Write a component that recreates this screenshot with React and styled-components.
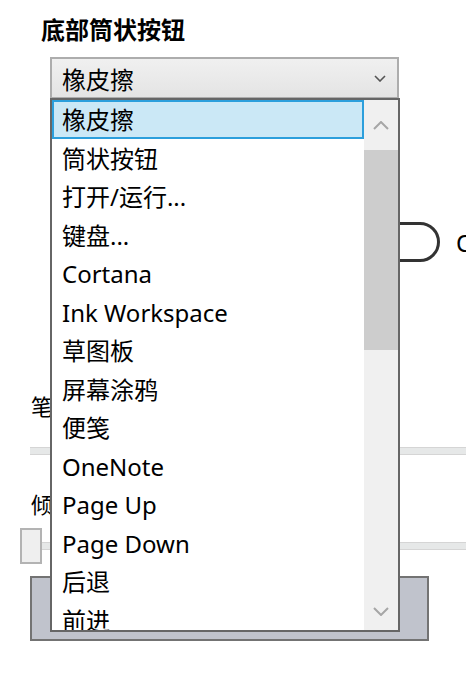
import React from "react";
import styled, { createGlobalStyle } from "styled-components";

const Global = createGlobalStyle`
  html, body { margin: 0; padding: 0; background: #fff; overflow: hidden; }
  body { font-family: "Noto Sans", "Noto Sans CJK SC", sans-serif; color: #000; }
`;

const Page = styled.div`
  width: 466px;
  height: 674px;
  padding-top: 14px;
  box-sizing: border-box;
  overflow: hidden;
`;

const Heading = styled.h2`
  margin: 0 0 11px 41px;
  font-size: 24px;
  line-height: 32px;
  font-weight: 700;
`;

const ComboWrap = styled.div`
  position: relative;
  margin-left: 50px;
  width: 349px;
`;

const Combo = styled.div`
  height: 41px;
  box-sizing: border-box;
  border: 2px solid #adadad;
  border-bottom-width: 1px;
  background: linear-gradient(#f0f0f0, #e4e4e4);
  display: flex;
  align-items: center;
  justify-content: space-between;
  padding: 0 11px 0 10px;
  font-size: 24px;
`;

const DropList = styled.div`
  position: absolute;
  top: 41px;
  left: 0;
  width: 350px;
  height: 534px;
  box-sizing: border-box;
  border: 2px solid #666;
  background: #fff;
  display: flex;
  z-index: 5;
`;

const Items = styled.div`
  flex: 1;
  overflow: hidden;
`;

const Item = styled.div`
  height: 38.5px;
  line-height: 36.5px;
  box-sizing: border-box;
  padding-left: 8px;
  border: 2px solid ${(p) => (p.$selected ? "#2c9fdc" : "transparent")};
  background: ${(p) => (p.$selected ? "#cbe8f6" : "transparent")};
  font-size: 24px;
  white-space: nowrap;
  overflow: hidden;
`;

const ScrollBar = styled.div`
  width: 34px;
  background: #f0f0f0;
  display: flex;
  flex-direction: column;
`;

const ArrowBox = styled.div`
  height: ${(p) => p.$h}px;
  display: flex;
  align-items: center;
  justify-content: center;
`;

const Thumb = styled.div`
  height: 200px;
  background: #cdcdcd;
`;

const Spacer = styled.div`
  flex: 1;
`;

const ToggleRow = styled.div`
  display: flex;
  align-items: center;
  gap: 16px;
  margin: 124px 0 0 352px;
  font-size: 24px;
  white-space: nowrap;
`;

const Toggle = styled.div`
  width: 88px;
  height: 40px;
  box-sizing: border-box;
  border: 3px solid #333;
  border-radius: 20px;
  flex-shrink: 0;
`;

const Label = styled.div`
  margin: ${(p) => p.$mt}px 0 0 31px;
  font-size: 22px;
  line-height: 32px;
`;

const Track = styled.div`
  margin: ${(p) => p.$mt}px 0 0 30px;
  height: 8px;
  box-sizing: border-box;
  background: #e6e8e8;
  border-top: 1px solid #d5d5d5;
  border-bottom: 1px solid #d5d5d5;
`;

const SliderRow = styled.div`
  position: relative;
  margin: 8px 0 0 20px;
  height: 36px;
  display: flex;
  align-items: center;
`;

const SliderTrack = styled.div`
  flex: 1;
  margin-left: 10px;
  height: 8px;
  box-sizing: border-box;
  background: #e6e8e8;
  border-top: 1px solid #d5d5d5;
  border-bottom: 1px solid #d5d5d5;
`;

const SliderThumb = styled.div`
  position: absolute;
  left: 0;
  top: 0;
  width: 22px;
  height: 36px;
  box-sizing: border-box;
  background: #efefef;
  border: 2px solid #b3b3b3;
`;

const GrayBox = styled.div`
  margin: 12px 0 0 30px;
  width: 399px;
  height: 65px;
  box-sizing: border-box;
  background: #c0c3cc;
  border: 2px solid #737373;
`;

const Chevron = ({ up, w = 12, h = 7, color = "#555", sw = 1.5 }) => (
  <svg width={w} height={h} viewBox={`0 0 ${w} ${h}`}>
    <polyline
      points={
        up
          ? `1,${h - 1} ${w / 2},1 ${w - 1},${h - 1}`
          : `1,1 ${w / 2},${h - 1} ${w - 1},1`
      }
      fill="none"
      stroke={color}
      strokeWidth={sw}
    />
  </svg>
);

const items = [
  "橡皮擦",
  "筒状按钮",
  "打开/运行...",
  "键盘...",
  "Cortana",
  "Ink Workspace",
  "草图板",
  "屏幕涂鸦",
  "便笺",
  "OneNote",
  "Page Up",
  "Page Down",
  "后退",
  "前进",
];

export default function App() {
  return (
    <>
      <Global />
      <Page>
        <Heading>底部筒状按钮</Heading>
        <ComboWrap>
          <Combo>
            <span>橡皮擦</span>
            <Chevron w={12} h={7} color="#555" sw={1.6} />
          </Combo>
          <DropList>
            <Items>
              {items.map((t, i) => (
                <Item key={t} $selected={i === 0}>
                  {t}
                </Item>
              ))}
            </Items>
            <ScrollBar>
              <ArrowBox $h={50}>
                <Chevron up w={16} h={9} color="#a6a6a6" sw={2} />
              </ArrowBox>
              <Thumb />
              <Spacer />
              <ArrowBox $h={38}>
                <Chevron w={16} h={9} color="#a6a6a6" sw={2} />
              </ArrowBox>
            </ScrollBar>
          </DropList>
        </ComboWrap>
        <ToggleRow>
          <Toggle />
          <span>Off</span>
        </ToggleRow>
        <Label $mt={128}>笔迹粗细</Label>
        <Track $mt={25} />
        <Label $mt={33}>倾斜灵敏度</Label>
        <SliderRow>
          <SliderTrack />
          <SliderThumb />
        </SliderRow>
        <GrayBox />
      </Page>
    </>
  );
}
